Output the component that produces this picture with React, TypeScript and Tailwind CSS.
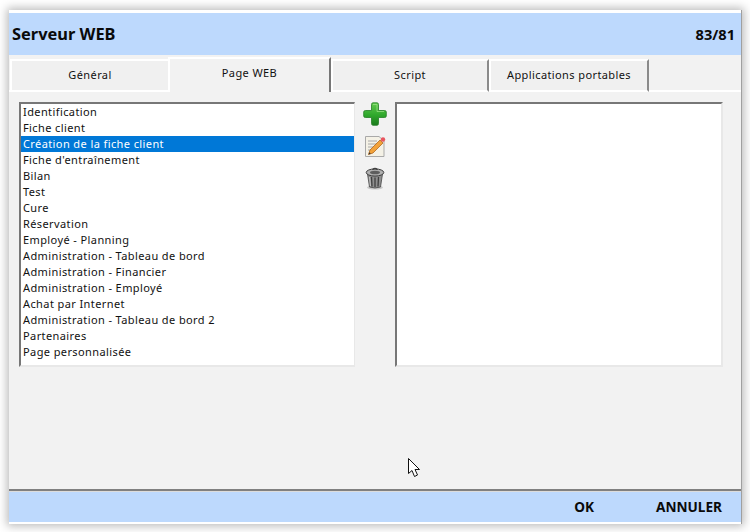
const items = [
  "Identification","Fiche client","Création de la fiche client","Fiche d'entraînement","Bilan","Test","Cure","Réservation","Employé - Planning","Administration - Tableau de bord","Administration - Financier","Administration - Employé","Achat par Internet","Administration - Tableau de bord 2","Partenaires","Page personnalisée",
];

function Plus() {
  return (
    <svg width="24" height="24" viewBox="0 0 24 24">
      <defs>
        <linearGradient id="g" x1="0" y1="0" x2="0" y2="1">
          <stop offset="0" stopColor="#62c94e" />
          <stop offset="0.55" stopColor="#2fa82c" />
          <stop offset="1" stopColor="#1b7a1c" />
        </linearGradient>
      </defs>
      <path d="M8.500 2.500Q8.500 0.800 10 0.800H14Q15.500 0.800 15.500 2.500V8.500H21.500Q23.300 8.500 23.300 10V14Q23.300 15.500 21.500 15.500H15.500V21.500Q15.500 23.300 14 23.300H10Q8.500 23.300 8.500 21.500V15.500H2.500Q0.700 15.500 0.700 14V10Q0.700 8.500 2.500 8.500H8.500Z" fill="url(#g)" stroke="#237f25" strokeWidth="0.8" />
      <path d="M10 2.500H14V9.500H21" fill="none" stroke="#a6e890" strokeWidth="1" opacity="0.65" />
    </svg>
  );
}

function Note() {
  return (
    <svg width="22" height="23" viewBox="0 0 22 23">
      <path d="M1.500 1.500H15L20 6V21.500H1.500Z" fill="#f4f1e6" stroke="#a9a9a9" strokeWidth="1" />
      <path d="M4 6H13M4 9H15M4 12H11M4 15H9" stroke="#a8a8a8" strokeWidth="1" />
      <path d="M4.500 19.500L6 15L16 5L19 8L9 18Z" fill="#f2a23a" stroke="#a85c12" strokeWidth="0.7" />
      <path d="M4.500 19.500L5.300 17.200L6.800 18.700Z" fill="#333" />
      <circle cx="19" cy="4.500" r="2.200" fill="#e8555f" />
    </svg>
  );
}

function Trash() {
  return (
    <svg width="20" height="23" viewBox="0 0 20 23">
      <ellipse cx="10" cy="20.500" rx="8" ry="2" fill="#c8c8c8" />
      <path d="M2.500 7L4.500 20Q10 22 15.500 20L17.500 7Z" fill="#8e8e8e" stroke="#474747" strokeWidth="0.8" />
      <path d="M6.500 10L7 19.500M10 10.500V20M13.500 10L13 19.500" stroke="#3f3f3f" strokeWidth="1.300" />
      <path d="M4.500 10L5.500 19" stroke="#c4c4c4" strokeWidth="1" />
      <ellipse cx="10" cy="5.500" rx="8.800" ry="3.600" fill="#b0b0b0" stroke="#3f3f3f" strokeWidth="1" />
      <ellipse cx="10" cy="5.500" rx="5" ry="1.800" fill="#5d5d5d" />
      <path d="M7.500 2.700Q10 0.300 12.500 2.700" fill="none" stroke="#3f3f3f" strokeWidth="1.200" />
    </svg>
  );
}

function Tab({ label, w, active, light }: { label: string; w: string; active?: boolean; light?: boolean }) {
  return (
    <div
      className={`${w} flex items-center justify-center shrink-0 border-t-2 border-l-2 border-t-white border-l-white text-[11px] tracking-[0.4px] text-[#111] ${
        active
          ? "h-[35px] bg-[#f2f2f2] border-r-2 border-r-[#777] pb-[4px]"
          : `h-[33px] bg-[#f0f0f0] ${light ? "border-r-0" : "border-r-2 border-r-[#8a8a8a]"} border-b-2 border-b-white`
      }`}
    >
      {label}
    </div>
  );
}

export default function App() {
  return (
    <div className="w-[750px] h-[532px] bg-white pt-[10px] pl-[9px] overflow-hidden font-['Noto_Sans','Open_Sans',sans-serif]">
      <div className="relative w-[733px] h-[514px] bg-[#f2f2f2] flex flex-col shadow-[0_0_9px_2px_rgba(0,0,0,0.28)] border-r border-r-[#a0a0a0]">
        <div className="h-[3px] bg-white shrink-0" />
        <div className="h-[42px] shrink-0 bg-[#bdd9fd] flex items-center justify-between pl-[3px] pr-[6px]">
          <span className="text-[16.4px] font-bold text-[#0a0a0a] leading-none">Serveur WEB</span>
          <span className="text-[14.6px] font-bold text-[#0a0a0a] leading-none">83/81</span>
        </div>
        <div className="h-[37px] shrink-0 flex items-end pl-px border-b-2 border-b-white">
          <Tab label="Général" w="w-[158px] -mb-[2px]" light />
          <Tab label="Page WEB" w="w-[163px] -mb-[2px]" active />
          <Tab label="Script" w="w-[158px] -mb-[2px]" />
          <Tab label="Applications portables" w="w-[160px] -mb-[2px]" />
        </div>
        <div className="flex-1 flex items-start pt-[10px] pl-[10px]">
          <div className="w-[336px] h-[265px] shrink-0 bg-white border-t-2 border-l-2 border-r border-b-2 border-t-[#777] border-l-[#777] border-r-[#e8e8e8] border-b-[#e8e8e8]">
            {items.map((t, i) => (
              <div
                key={t}
                className={`h-[16px] pl-[2px] text-[11px] leading-[16px] tracking-[0.4px] whitespace-nowrap ${
                  i === 2 ? "bg-[#0078d7] text-white" : "text-[#111]"
                }`}
              >
                {t}
              </div>
            ))}
          </div>
          <div className="w-[40px] shrink-0 flex flex-col items-center -mt-[2px]">
            <div className="h-[27px] flex items-center justify-center"><Plus /></div>
            <div className="h-[31px] flex items-end justify-center"><Note /></div>
            <div className="h-[32px] flex items-end justify-center"><Trash /></div>
          </div>
          <div className="w-[328px] h-[265px] shrink-0 bg-white border-2 border-t-[#777] border-l-[#777] border-r-[#e8e8e8] border-b-[#e8e8e8]" />
        </div>
        <div className="h-[3px] shrink-0 bg-[#808080] border-b border-b-[#dcdcdc]" />
        <div className="h-[30px] shrink-0 bg-[#bdd9fd] flex items-center justify-end pt-[1px] text-[13.6px] font-bold text-[#0a0a0a]">
          <span className="mr-[62px]">OK</span>
          <span className="mr-[19px]">ANNULER</span>
        </div>
        <div className="h-[2px] shrink-0 bg-white" />
        <svg className="absolute left-[399px] top-[448px]" width="14" height="20" viewBox="0 0 14 20">
          <path d="M0.500 0.500V15.500L4 12.500L6.500 18.500L9.500 17L7 11.500H11.500Z" fill="#fff" stroke="#111" strokeWidth="1" />
        </svg>
      </div>
    </div>
  );
}
